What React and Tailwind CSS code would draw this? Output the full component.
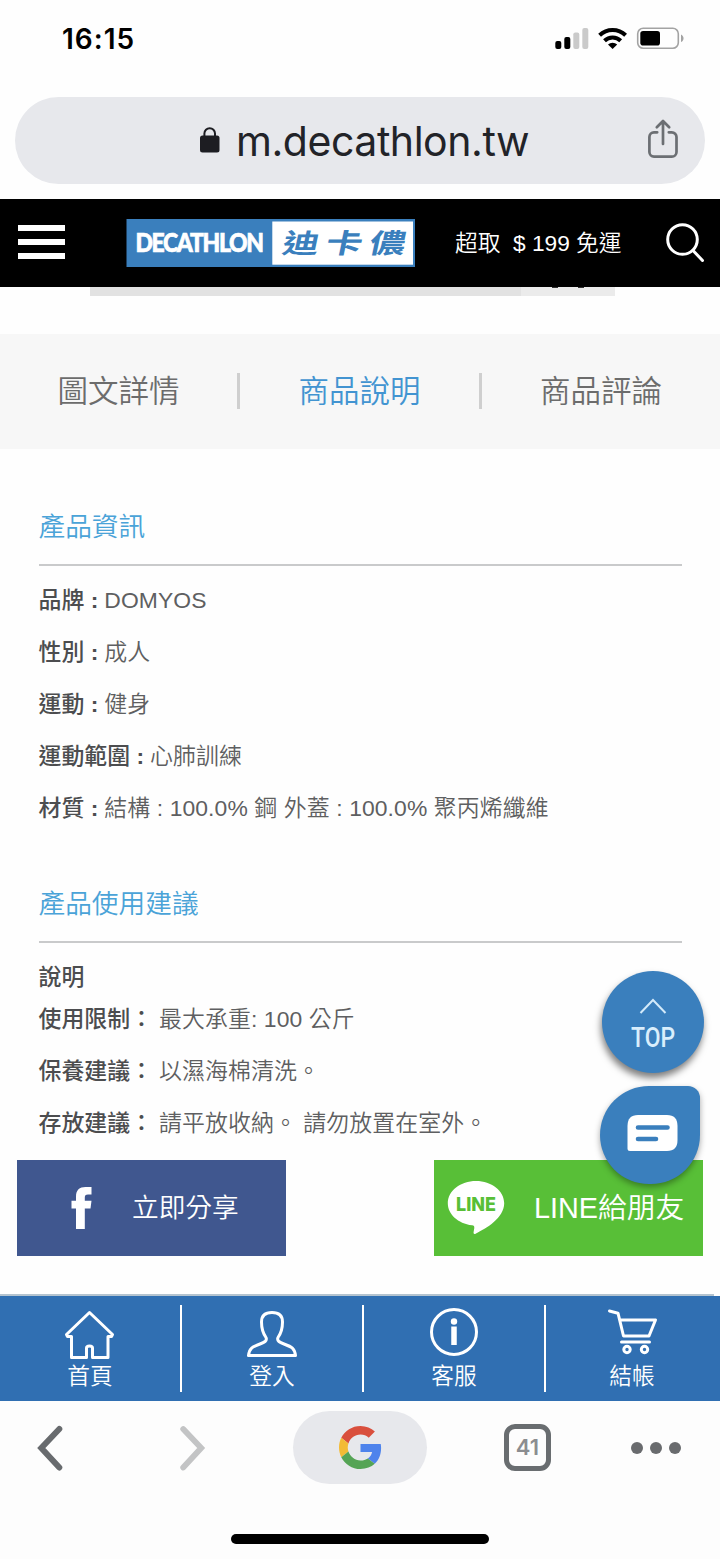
import React from "react";

const CJK = "font-['Liberation_Sans','Noto_Sans_CJK_TC',sans-serif]";

function StatusBar() {
  return (
    <div className="flex h-[97px] items-start justify-between pl-[62px] pr-[35px] font-['Inter',sans-serif]">
      <span className="mt-[20px] text-[28px] leading-[38px] font-semibold tracking-[1px] text-black">16:15</span>
      <svg className="mt-[24px]" width="132" height="28" viewBox="553 24 132 28">
        <rect x="555.3" y="41" width="6" height="8" rx="2" fill="#000" />
        <rect x="564.3" y="37" width="6" height="12" rx="2" fill="#000" />
        <rect x="573.3" y="32.5" width="6" height="16.5" rx="2" fill="#cacaca" />
        <rect x="582.3" y="28" width="6" height="21" rx="2" fill="#cacaca" />
        <g fill="none" stroke="#000" strokeWidth="4">
          <path d="M599.6 35.2a18.6 18.6 0 0 1 26 0" />
          <path d="M604.5 40.8a11.6 11.6 0 0 1 16.2 0" />
        </g>
        <path d="M608 44.6a6.6 6.6 0 0 1 9.2 0l-4.6 4.4z" fill="#000" />
        <rect x="637.7" y="28.2" width="40.6" height="20" rx="5.5" fill="none" stroke="#a3a3a3" strokeWidth="1.6" />
        <rect x="640.3" y="31" width="19.7" height="14.6" rx="2.8" fill="#000" />
        <path d="M681 34.5c3.4 1.6 3.4 6 0 7.6z" fill="#a3a3a3" />
      </svg>
    </div>
  );
}

function UrlBar() {
  return (
    <div className="mx-[15px] mb-[15px] flex h-[87px] items-center rounded-full bg-[#e7e8ec] pl-[184px] pr-[27px]">
      <svg className="-mt-[2px]" width="21" height="28" viewBox="0 0 21 28">
        <rect x="1" y="9.5" width="19.5" height="17" rx="2.5" fill="#1d1d22" />
        <path d="M5.4 11V7.5a5.3 5.3 0 0 1 10.6 0V11" fill="none" stroke="#1d1d22" strokeWidth="2" />
      </svg>
      <span className="ml-[16px] whitespace-nowrap font-['Inter',sans-serif] text-[41px] leading-[50px] tracking-[-0.45px] text-[#222328]">
        m.decathlon.tw
      </span>
      <svg className="ml-auto -mt-[4px]" width="30" height="40" viewBox="0 0 30 40" fill="none" stroke="#6c6f73" strokeWidth="2.7" strokeLinecap="round" strokeLinejoin="round">
        <path d="M9.2 13.3H6a4.7 4.7 0 0 0-4.6 4.7v15A4.7 4.7 0 0 0 6 37.6h17.800a4.700 4.700 0 0 0 4.700-4.700V18a4.700 4.700 0 0 0-4.700-4.700h-3" />
        <path d="M15 25V3M8.800 8.200L15 2l6.200 6.200" />
      </svg>
    </div>
  );
}

function Logo() {
  return (
    <svg width="289" height="49" viewBox="126 219 289 49">
      <rect x="126.500" y="219" width="288.500" height="48" fill="#3a7fbd" />
      <rect x="272.300" y="221.500" width="140.700" height="43.200" fill="#fff" />
      <g transform="translate(135.500 252) scale(0.880 1)">
        <text x="0" y="0" textLength="146" lengthAdjust="spacing" className="font-['Lato',sans-serif] text-[26px] font-black" fill="#fff" stroke="#fff" strokeWidth="0.700">
          DECATHLON
        </text>
      </g>
      <g transform="translate(281 252.500) skewX(-12) scale(1.350 1)">
        <text x="0" y="0" textLength="91" lengthAdjust="spacing" className="font-['Noto_Sans_CJK_TC',sans-serif] text-[27px] font-bold" fill="#3a7fbd">
          迪卡儂
        </text>
      </g>
    </svg>
  );
}

function SiteHeader() {
  return (
    <header className="flex h-[88px] items-center bg-black">
      <div className="ml-[18px] -mt-[3px] flex w-[47px] flex-col gap-[8px]">
        <div className="h-[6px] bg-white" />
        <div className="h-[6px] bg-white" />
        <div className="h-[6px] bg-white" />
      </div>
      <div className="ml-[61px]">
        <Logo />
      </div>
      <span className={`${CJK} ml-[40px] w-[190px] whitespace-pre text-[22.700px] leading-[30px] font-[350] text-white`}>
        {"超取  $ 199 免運"}
      </span>
      <svg className="ml-[21px]" width="40" height="40" viewBox="0 0 40 40" fill="none" stroke="#fff" strokeWidth="3" strokeLinecap="round">
        <circle cx="16.500" cy="16.500" r="14.800" />
        <path d="M27 27.500L36.500 37.500" />
      </svg>
    </header>
  );
}

function Tabs() {
  return (
    <nav className={`${CJK} flex h-[115px] items-center justify-between bg-[#f7f7f7] pb-[2px] text-[30.500px] leading-[40px] font-[350] text-[#6c6c6c]`}>
      <span className="w-[237px] text-center">圖文詳情</span>
      <span className="h-[36px] w-[3px] bg-[#cfcfcf]" />
      <span className="w-[238px] text-center text-[#4294d1]">商品說明</span>
      <span className="h-[36px] w-[3px] bg-[#cfcfcf]" />
      <span className="w-[238px] text-center">商品評論</span>
    </nav>
  );
}

function Row({ label, colon, children }) {
  return (
    <div className="flex h-[52px] items-center gap-[6px] whitespace-pre">
      <span className="font-medium text-[#4c4d4f]">
        {label}
        <b>{colon}</b>
      </span>
      <span className="tracking-[0.1px]">{children}</span>
    </div>
  );
}

function Details() {
  return (
    <main className={`${CJK} h-[711px] px-[38.500px] pt-[58px] text-[22.900px] leading-[32px] font-[350] text-[#5e5f61]`}>
      <h2 className="h-[59px] border-b-2 border-[#c9cacb] text-[26.700px] leading-[40px] text-[#4aa3d8]">產品資訊</h2>
      <div className="pt-[8px]">
        <Row label="品牌" colon=" :">DOMYOS</Row>
        <Row label="性別" colon=" :">成人</Row>
        <Row label="運動" colon=" :">健身</Row>
        <Row label="運動範圍" colon=" :">心肺訓練</Row>
        <Row label="材質" colon=" :">結構 : 100.0% 鋼 外蓋 : 100.0% 聚丙烯纖維</Row>
      </div>
      <h2 className="mt-[50px] h-[59px] border-b-2 border-[#c9cacb] text-[26.700px] leading-[40px] text-[#4aa3d8]">產品使用建議</h2>
      <div className="mt-[18px] h-[32px] font-medium text-[#4c4d4f]">說明</div>
      <Row label="使用限制：">最大承重: 100 公斤</Row>
      <Row label="保養建議：">以濕海棉清洗。</Row>
      <Row label="存放建議：">請平放收納。 請勿放置在室外。</Row>
    </main>
  );
}

function ShareRow() {
  return (
    <div className={`${CJK} flex h-[134px] items-start justify-between pl-[17px] pr-[17px] font-[350] text-white`}>
      <div className="flex h-[96px] w-[269px] items-center bg-[#40578f]">
        <svg className="ml-[54px]" width="22" height="44" viewBox="0 0 22 44">
          <path d="M5 43V22.500H.500V14.800H5V10.500C5 4 8.500 1 14.500 1H20.500V8.500H17C14.500 8.500 13.800 9.500 13.800 11.500V14.800H20.500L19.500 22.500H13.800V43Z" fill="#fff" />
        </svg>
        <span className="ml-[39px] text-[26.700px] leading-[36px]">立即分享</span>
      </div>
      <div className="flex h-[96px] w-[269px] items-center bg-[#58bf37]">
        <svg className="ml-[13px]" width="58" height="56" viewBox="0 0 58 56">
          <path d="M29 1C13.500 1 .800 10.900.800 23.200c0 11 10 20.200 24.300 22.100 1.800.400 2.300 1 2.200 2.600l-.700 4.200c-.300 2 .800 2.200 2.400 1.300C39 48.500 57.200 38 57.200 23.200 57.200 10.900 44.500 1 29 1Z" fill="#fff" />
          <text x="9" y="30.500" textLength="40" lengthAdjust="spacingAndGlyphs" className="font-['Inter',sans-serif] text-[19px] font-extrabold" fill="#58bf37">LINE</text>
        </svg>
        <span className="ml-[29px] whitespace-nowrap text-[28.800px] leading-[38px]">LINE給朋友</span>
      </div>
    </div>
  );
}

function NavItem({ label, children }) {
  return (
    <div className="flex h-full flex-col items-center pt-[10px]">
      <svg width="54" height="54" viewBox="0 0 54 54" fill="none" stroke="#fff" strokeWidth="3" strokeLinejoin="round" strokeLinecap="round">
        {children}
      </svg>
      <span className="mt-[1px] text-[22.700px] leading-[30px]">{label}</span>
    </div>
  );
}

function Divider() {
  return <div className="mt-[9px] h-[87px] w-[2px] bg-white" />;
}

function BottomNav() {
  return (
    <div>
      <div className="mr-[6px] h-[2px] bg-[#b3c3cf]" />
      <nav className={`${CJK} grid h-[105px] grid-cols-[180px_2px_180px_2px_180px_2px_172px] bg-[#306fb2] font-[350] text-white`}>
        <NavItem label="首頁">
          <path d="M26.500 6.500L3.500 28.500l1 2H8.500v21H23.500V42q0-2 3-2t3 2v9.500H45V30.500H48.500l1-2Z" />
        </NavItem>
        <Divider />
        <NavItem label="登入">
          <path d="M27 6.500c-6.500 0-10.500 3-10.500 9.500 0 8 2 12 4.500 15.500 1.500 3.500-2 5-6 6.500C7 41 4.500 42 3.500 49.500H50.500C49.500 42 47 41 39 38c-4-1.500-7.500-3-6-6.500 2.500-3.500 4.500-7.500 4.500-15.500 0-6.500-4-9.500-10.500-9.500Z" />
        </NavItem>
        <Divider />
        <NavItem label="客服">
          <circle cx="27" cy="26" r="22.500" />
          <circle cx="27" cy="15.500" r="3.200" fill="#fff" stroke="none" />
          <path d="M27 20.500V39" strokeWidth="5.500" strokeLinecap="butt" />
        </NavItem>
        <Divider />
        <NavItem label="結帳">
          <path d="M4.500 5l8.500 2.200L18.500 30H44L50.500 14H15.200M16.500 36H44.500" />
          <circle cx="22" cy="43.500" r="3.200" />
          <circle cx="39.500" cy="43.500" r="3.200" />
        </NavItem>
      </nav>
    </div>
  );
}

function BrowserBar() {
  return (
    <div className="flex h-[158px] flex-col items-center bg-[#fdfdfd]">
      <div className="flex h-[93px] w-full items-center">
        <svg className="ml-[36px]" width="28" height="46" viewBox="0 0 28 46" fill="none" stroke="#686b6e" strokeWidth="6" strokeLinecap="round">
          <path d="M23.300 4L5.300 23l18 19.500" />
        </svg>
        <svg className="ml-[114px]" width="28" height="46" viewBox="0 0 28 46" fill="none" stroke="#c3c4c5" strokeWidth="5.800" strokeLinecap="round">
          <path d="M5.200 4l18 19-18 19.500" />
        </svg>
        <div className="ml-[87px] flex h-[73px] w-[134px] items-center justify-center rounded-full bg-[#e7e8ec]">
          <svg width="43" height="43" viewBox="0 0 48 48">
            <path fill="#d94f3d" d="M24 9.500c3.540 0 6.710 1.220 9.210 3.600l6.850-6.850C35.900 2.380 30.470 0 24 0 14.620 0 6.510 5.380 2.560 13.220l7.980 6.190C12.430 13.720 17.740 9.500 24 9.500z" />
            <path fill="#4e83ec" d="M46.980 24.550c0-1.570-.150-3.090-.380-4.550H24v9.020h12.940c-.580 2.960-2.260 5.480-4.780 7.180l7.730 6c4.510-4.180 7.090-10.360 7.090-17.650z" />
            <path fill="#f3bb35" d="M10.530 28.590c-.480-1.450-.760-2.990-.760-4.590s.270-3.140.760-4.590l-7.980-6.190C.920 16.460 0 20.120 0 24c0 3.880.920 7.540 2.560 10.780l7.970-6.190z" />
            <path fill="#55a455" d="M24 48c6.480 0 11.930-2.130 15.890-5.810l-7.730-6c-2.150 1.450-4.920 2.300-8.160 2.300-6.260 0-11.570-4.220-13.470-9.910l-7.980 6.190C6.510 42.620 14.620 48 24 48z" />
          </svg>
        </div>
        <div className="ml-[77px] flex h-[47px] w-[47px] items-center justify-center rounded-[11px] border-[5px] border-[#696d70] font-['Inter',sans-serif] text-[22px] font-semibold text-[#8b8d90]">
          41
        </div>
        <div className="ml-[80px] flex gap-[7px]">
          <div className="size-[12px] rounded-full bg-[#696b6e]" />
          <div className="size-[12px] rounded-full bg-[#696b6e]" />
          <div className="size-[12px] rounded-full bg-[#696b6e]" />
        </div>
      </div>
      <div className="mt-[40px] h-[10px] w-[258px] rounded-full bg-black" />
    </div>
  );
}

function FloatingButtons() {
  return (
    <div className="absolute left-[600px] top-[971px] flex flex-col">
      <div className="ml-[2px] flex size-[102px] flex-col items-center rounded-full bg-[#3a7fbd] pt-[26px] shadow-[-1px_5px_7px_rgba(0,0,0,0.5)]">
        <svg width="28" height="18" viewBox="0 0 28 18" fill="none" stroke="#d3eafa" strokeWidth="2">
          <path d="M1.500 16L14 3l12.500 13" />
        </svg>
        <svg width="56" height="46" viewBox="0 0 56 46">
          <text x="6" y="32" textLength="44" lengthAdjust="spacingAndGlyphs" className="font-['Roboto',sans-serif] text-[28px] font-medium" fill="#d9eefc">TOP</text>
        </svg>
      </div>
      <div className="mt-[13px] flex h-[98px] w-[100px] items-center justify-center rounded-[49px] rounded-tr-[12px] bg-[#3a7fbd] shadow-[0_3px_6px_rgba(0,0,0,0.35)]">
        <svg className="ml-[5px] -mt-[4px]" width="51" height="38" viewBox="0 0 51 38">
          <path d="M11 1H40Q50.500 1 50.500 12V26Q50.500 37 40 37H3Q.500 37 .500 34.500V12Q.500 1 11 1Z" fill="#fff" />
          <path d="M11 13.500H40.500M11 25H29" fill="none" stroke="#3a7fbd" strokeWidth="4.600" strokeLinecap="round" />
        </svg>
      </div>
    </div>
  );
}

export default function App() {
  return (
    <div className="relative h-[1559px] w-[720px] overflow-hidden bg-[#fefefe]">
      <StatusBar />
      <UrlBar />
      <SiteHeader />
      <div className="flex h-[47px] items-start pl-[90px]">
        <div className="h-[9px] w-[431px] bg-[#e2e2e2]" />
        <div className="flex h-[9px] w-[94px] justify-center gap-[20px] bg-[#ebebeb]">
          <div className="h-px w-[6px] bg-[#333]" />
          <div className="h-px w-[6px] bg-[#333]" />
        </div>
      </div>
      <Tabs />
      <Details />
      <ShareRow />
      <BottomNav />
      <BrowserBar />
      <FloatingButtons />
    </div>
  );
}
